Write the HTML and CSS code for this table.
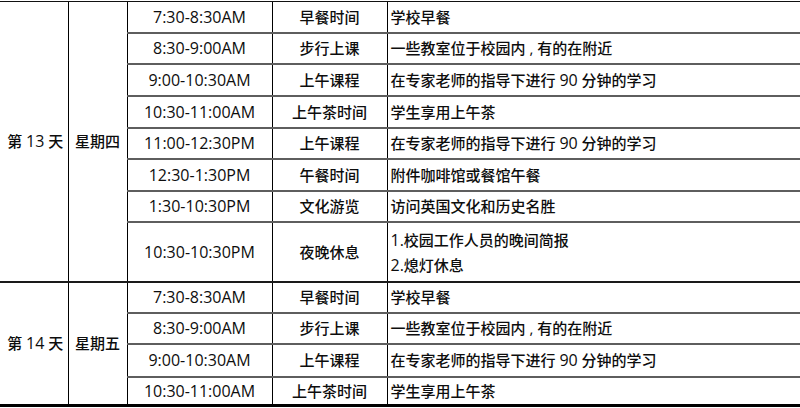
FILE: index.html
```html
<!DOCTYPE html>
<html lang="zh-CN">
<head>
<meta charset="utf-8">
<title>日程表</title>
<link rel="stylesheet" href="styles.css">
</head>
<body>
<table class="sched">
  <colgroup>
    <col class="c1"><col class="c2"><col class="c3"><col class="c4"><col class="c5">
  </colgroup>
  <tbody>
    <tr class="first h31">
      <td class="day" rowspan="8">第 <span class="n">13</span> 天</td>
      <td class="wk" rowspan="8">星期四</td>
      <td class="t">7:30-8:30AM</td>
      <td class="act">早餐时间</td>
      <td class="desc">学校早餐</td>
    </tr>
    <tr class="h31">
      <td class="t">8:30-9:00AM</td>
      <td class="act">步行上课</td>
      <td class="desc">一些教室位于校园内 , 有的在附近</td>
    </tr>
    <tr class="h32">
      <td class="t">9:00-10:30AM</td>
      <td class="act">上午课程</td>
      <td class="desc">在专家老师的指导下进行 <span class="n">90</span> 分钟的学习</td>
    </tr>
    <tr class="h32">
      <td class="t">10:30-11:00AM</td>
      <td class="act">上午茶时间</td>
      <td class="desc">学生享用上午茶</td>
    </tr>
    <tr class="h31">
      <td class="t">11:00-12:30PM</td>
      <td class="act">上午课程</td>
      <td class="desc">在专家老师的指导下进行 <span class="n">90</span> 分钟的学习</td>
    </tr>
    <tr class="h32">
      <td class="t">12:30-1:30PM</td>
      <td class="act">午餐时间</td>
      <td class="desc">附件咖啡馆或餐馆午餐</td>
    </tr>
    <tr class="h31">
      <td class="t">1:30-10:30PM</td>
      <td class="act">文化游览</td>
      <td class="desc">访问英国文化和历史名胜</td>
    </tr>
    <tr class="h60">
      <td class="t">10:30-10:30PM</td>
      <td class="act">夜晚休息</td>
      <td class="desc two"><span class="n">1.</span>校园工作人员的晚间简报<br><span class="n">2.</span>熄灯休息</td>
    </tr>
    <tr class="group h31">
      <td class="day end" rowspan="4">第 <span class="n">14</span> 天</td>
      <td class="wk end" rowspan="4">星期五</td>
      <td class="t">7:30-8:30AM</td>
      <td class="act">早餐时间</td>
      <td class="desc">学校早餐</td>
    </tr>
    <tr class="h31">
      <td class="t">8:30-9:00AM</td>
      <td class="act">步行上课</td>
      <td class="desc">一些教室位于校园内 , 有的在附近</td>
    </tr>
    <tr class="h33">
      <td class="t">9:00-10:30AM</td>
      <td class="act">上午课程</td>
      <td class="desc">在专家老师的指导下进行 <span class="n">90</span> 分钟的学习</td>
    </tr>
    <tr class="last h29">
      <td class="t">10:30-11:00AM</td>
      <td class="act">上午茶时间</td>
      <td class="desc">学生享用上午茶</td>
    </tr>
  </tbody>
</table>
</body>
</html>
```

FILE: styles.css
```css
html, body {
  margin: 0;
  padding: 0;
  background: #ffffff;
}

body {
  padding-top: 1px;
  font-family: "Open Sans", "Noto Sans CJK SC", sans-serif;
  font-size: 15px;
  font-weight: 500;
  color: #0d0d0d;
}

.sched {
  width: 800px;
  border-collapse: collapse;
  table-layout: fixed;
}

.c1 { width: 68px; }
.c2 { width: 59px; }
.c3 { width: 145px; }
.c4 { width: 115px; }
.c5 { width: 413px; }

.sched td {
  padding: 0 3px;
  border-left: 1px solid #000000;
  border-top: 2px solid #5e5e5e;
  text-align: center;
  vertical-align: middle;
  line-height: 20px;
  white-space: nowrap;
}

.sched td.day {
  border-left: none;
  padding-left: 6px;
}

.sched td.desc {
  text-align: left;
}

.sched td.two {
  line-height: 25px;
  padding-top: 3px;
}

.sched .first td {
  border-top: 1px solid #111111;
}

.sched .group td {
  border-top: 2px solid #1a1a1a;
}

.sched .last td,
.sched td.end {
  border-bottom: 3px solid #000000;
}

.t {
  font-size: 16px;
}

.n {
  font-size: 16px;
}

.h29 { height: 29px; }
.h31 { height: 31px; }
.h32 { height: 32px; }
.h33 { height: 33px; }
.h60 { height: 60px; }
```
